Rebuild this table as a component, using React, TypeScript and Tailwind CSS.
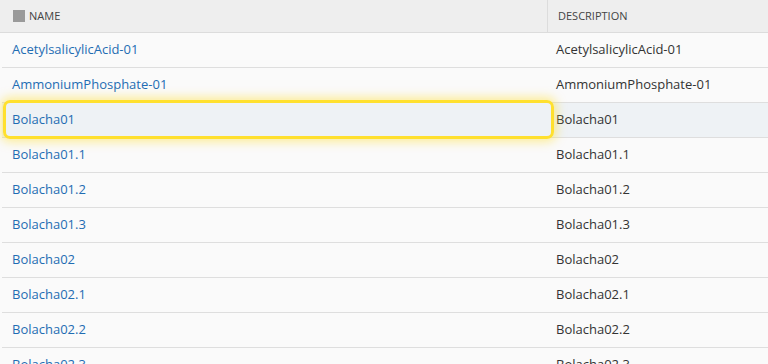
const rows = [
  "AcetylsalicylicAcid-01",
  "AmmoniumPhosphate-01",
  "Bolacha01",
  "Bolacha01.1",
  "Bolacha01.2",
  "Bolacha01.3",
  "Bolacha02",
  "Bolacha02.1",
  "Bolacha02.2",
  "Bolacha02.3",
];

export default function App() {
  return (
    <div
      className="h-[364px] w-[768px] overflow-hidden bg-[#fafafa]"
      style={{ fontFamily: '"Open Sans", sans-serif' }}
    >
      {/* Header */}
      <div className="flex h-[33px] border-b border-[#dcdcdc] bg-[#eeeeee] text-[11px] text-[#444]">
        <div className="flex w-[547px] items-center gap-[4px] pl-[13px]">
          <span className="h-[12px] w-[12px] bg-[#9a9a9a]" />
          <span>NAME</span>
        </div>
        <div className="flex flex-1 items-center border-l border-[#dcdcdc] pl-[10px]">DESCRIPTION</div>
      </div>

      {/* Rows */}
      <div className="pl-[2px]">
        {rows.map((name, i) => {
          const selected = i === 2;
          return (
            <div
              key={name}
              className={`flex h-[35px] border-b border-[#dedede] text-[13px] ${selected ? "bg-[#eef2f5]" : ""}`}
            >
              <div className="relative flex w-[545px] items-center pl-[10px] text-[#1f6db3]">
                {selected && (
                  <div className="absolute -top-[3px] -bottom-[2px] left-[1px] -right-[7px] rounded-[7px] border-[3px] border-[#ffe02e] shadow-[0_0_10px_3px_rgba(255,226,58,0.5)]" />
                )}
                <span className="relative">{name}</span>
              </div>
              <div className="flex flex-1 items-center pl-[9px] text-[#333]">{name}</div>
            </div>
          );
        })}
      </div>
    </div>
  );
}
